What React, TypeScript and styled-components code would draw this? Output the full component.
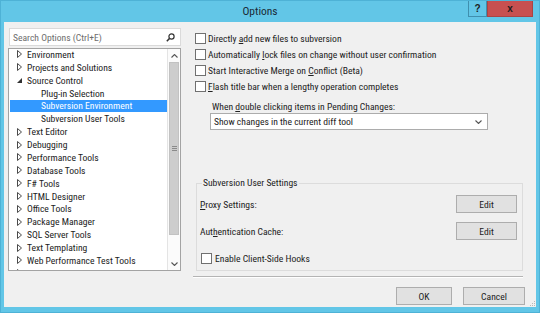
import styled, { createGlobalStyle } from 'styled-components';

const GlobalStyle = createGlobalStyle`
  html, body {
    margin: 0;
    padding: 0;
    background: #62c6e7;
  }

  body {
    font-family: "Roboto Condensed", "Noto Sans", sans-serif;
    font-size: 9.6px;
    color: #222;
  }

  *, *::before, *::after {
    box-sizing: border-box;
  }
`;

const Window = styled.div`
  width: 540px;
  height: 313px;
  display: flex;
  flex-direction: column;
  background: #62c6e7;
  border: 1px solid #4eb2d6;
  padding: 0 3px 5px 3px;
`;

const TitleBar = styled.div`
  height: 21px;
  display: flex;
  align-items: flex-start;
  flex-shrink: 0;
`;

const Title = styled.div`
  flex: 1;
  text-align: center;
  padding-left: 48px;
  font-size: 11.5px;
  line-height: 21px;
  color: #1b2b36;
`;

const CaptionButton = styled.div<{ $close?: boolean }>`
  width: ${({ $close }) => ($close ? '46px' : '19px')};
  height: 16px;
  margin-right: ${({ $close }) => ($close ? '3px' : '0')};
  display: flex;
  align-items: center;
  justify-content: center;
  background: ${({ $close }) => ($close ? '#c75050' : '#62c6e7')};
  border: 1px solid ${({ $close }) => ($close ? '#a94444' : '#3f8fae')};
  border-top: none;
  color: #1c1c1c;
  font-family: "Liberation Sans", sans-serif;
  font-weight: bold;
  font-size: 10px;
`;

const Client = styled.div`
  flex: 1;
  position: relative;
  display: grid;
  grid-template-columns: 173px 1fr;
  padding: 6px 0 0 4px;
  background: #f0f0f0;
`;

const LeftColumn = styled.div`
  display: flex;
  flex-direction: column;
`;

const SearchBox = styled.div`
  width: 172px;
  height: 18px;
  margin-left: 1px;
  display: flex;
  align-items: center;
  justify-content: space-between;
  padding: 0 5px 0 3px;
  background: #fff;
  border: 1px solid #dadada;
  color: #6d6d6d;
`;

const Tree = styled.div`
  height: 223px;
  margin-top: 2px;
  display: flex;
  background: #fff;
  border: 1px solid #a3a3a3;
`;

const TreeList = styled.div`
  flex: 1;
  overflow: hidden;
  margin-top: -1px;
  padding-left: 1px;
`;

const TreeRow = styled.div<{ $level: number; $selected?: boolean }>`
  height: 12.875px;
  display: flex;
  align-items: center;
  white-space: nowrap;
  padding-left: ${({ $level }) => 7 + $level * 14}px;
  background: ${({ $selected }) => ($selected ? '#3399ff' : 'transparent')};
  color: ${({ $selected }) => ($selected ? '#fff' : '#222')};
`;

const Expander = styled.span`
  width: 10px;
  height: 8px;
  flex-shrink: 0;
  display: flex;
  align-items: center;
`;

const ScrollBar = styled.div`
  width: 13px;
  display: flex;
  flex-direction: column;
  background: #fbfbfb;
  border-left: 1px solid #e4e4e4;
`;

const ScrollArrow = styled.div<{ $height: number }>`
  height: ${({ $height }) => $height}px;
  display: flex;
  align-items: center;
  justify-content: center;
`;

const ScrollThumb = styled.div`
  height: 173px;
  margin: 0 1px;
  display: flex;
  align-items: center;
  justify-content: center;
  background: #cdcdcd;
  border: 1px solid #c2c2c2;
`;

const ScrollTrack = styled.div`
  flex: 1;
`;

const RightColumn = styled.div`
  display: flex;
  flex-direction: column;
`;

const CheckList = styled.div`
  margin-top: 2px;
  display: flex;
  flex-direction: column;
`;

const CheckRow = styled.label<{ $indent: number; $gap: number }>`
  height: 16px;
  display: flex;
  align-items: center;
  gap: ${({ $gap }) => $gap}px;
  padding-left: ${({ $indent }) => $indent}px;
  white-space: nowrap;
`;

const Box = styled.span`
  width: 11px;
  height: 11px;
  flex-shrink: 0;
  background: #fff;
  border: 1px solid #707070;
`;

const FieldLabel = styled.div`
  margin-top: 7px;
  padding-left: 31px;
  line-height: 12px;
`;

const Select = styled.div`
  width: 278px;
  height: 17px;
  margin-left: 29px;
  display: flex;
  align-items: center;
  justify-content: space-between;
  padding: 0 5px 0 3px;
  background: #fff;
  border: 1px solid #acacac;
`;

const GroupBox = styled.fieldset`
  margin: 47px 13px 0 15px;
  padding: 3px 5px 4px 3px;
  border: 1px solid #dcdcdc;
  min-width: 0;
`;

const GroupLegend = styled.legend`
  margin-left: 2px;
  padding: 0 1px;
  line-height: 12px;
`;

const SettingRow = styled.div<{ $gap: number }>`
  height: 18px;
  margin-top: ${({ $gap }) => $gap}px;
  display: flex;
  align-items: center;
  justify-content: space-between;
`;

const PushButton = styled.div<{ $width: number }>`
  width: ${({ $width }) => $width}px;
  height: 18px;
  display: flex;
  align-items: center;
  justify-content: center;
  background: #e1e1e1;
  border: 1px solid #adadad;
`;

const HooksRow = styled.div`
  margin-top: 10px;
`;

const Separator = styled.div`
  height: 2px;
  margin: 5px 13px 0 12px;
  border-top: 1px solid #b4b4b4;
  border-bottom: 1px solid #fff;
`;

const ButtonBar = styled.div`
  margin-top: 9px;
  padding-right: 11px;
  display: flex;
  justify-content: flex-end;
  gap: 11px;
`;

const Grip = styled.svg`
  position: absolute;
  right: 1px;
  bottom: 1px;
`;

type Node = { label: string; level: number; state?: 'open' | 'closed'; selected?: boolean };

const treeNodes: Node[] = [
  { label: 'Environment', level: 0, state: 'closed' },
  { label: 'Projects and Solutions', level: 0, state: 'closed' },
  { label: 'Source Control', level: 0, state: 'open' },
  { label: 'Plug-in Selection', level: 1 },
  { label: 'Subversion Environment', level: 1, selected: true },
  { label: 'Subversion User Tools', level: 1 },
  { label: 'Text Editor', level: 0, state: 'closed' },
  { label: 'Debugging', level: 0, state: 'closed' },
  { label: 'Performance Tools', level: 0, state: 'closed' },
  { label: 'Database Tools', level: 0, state: 'closed' },
  { label: 'F# Tools', level: 0, state: 'closed' },
  { label: 'HTML Designer', level: 0, state: 'closed' },
  { label: 'Office Tools', level: 0, state: 'closed' },
  { label: 'Package Manager', level: 0, state: 'closed' },
  { label: 'SQL Server Tools', level: 0, state: 'closed' },
  { label: 'Text Templating', level: 0, state: 'closed' },
  { label: 'Web Performance Test Tools', level: 0, state: 'closed' },
  { label: 'Windows Forms Designer', level: 0, state: 'closed' },
];

const ExpanderIcon = ({ state }: { state?: 'open' | 'closed' }) => {
  if (state === 'closed') {
    return (
      <svg width="5" height="8" viewBox="0 0 5 8">
        <path d="M0.5 0.5 L4.5 4 L0.5 7.5 Z" fill="none" stroke="#4a4a4a" strokeWidth="1" />
      </svg>
    );
  }
  if (state === 'open') {
    return (
      <svg width="5" height="8" viewBox="0 0 5 8">
        <path d="M5 2 L5 7 L0 7 Z" fill="#333" />
      </svg>
    );
  }
  return null;
};

const Chevron = ({ up }: { up?: boolean }) => (
  <svg width="7" height="4" viewBox="0 0 7 4">
    <path d={up ? 'M0.5 3.5 L3.5 0.5 L6.5 3.5' : 'M0.5 0.5 L3.5 3.5 L6.5 0.5'} fill="none" stroke="#555" strokeWidth="1.1" />
  </svg>
);

const SearchIcon = () => (
  <svg width="9" height="9" viewBox="0 0 9 9">
    <circle cx="5.5" cy="3.5" r="2.6" fill="none" stroke="#333" strokeWidth="1.2" />
    <path d="M3.6 5.4 L0.8 8.2" stroke="#333" strokeWidth="1.5" />
  </svg>
);

const ThumbGrip = () => (
  <svg width="5" height="5" viewBox="0 0 5 5">
    <path d="M0 0.5 H5 M0 2.5 H5 M0 4.5 H5" stroke="#8a8a8a" strokeWidth="1" />
  </svg>
);

const Check = ({ children, indent = 14, gap = 2 }: { children: React.ReactNode; indent?: number; gap?: number }) => (
  <CheckRow $indent={indent} $gap={gap}>
    <Box />
    <span>{children}</span>
  </CheckRow>
);

const App = () => (
  <>
    <GlobalStyle />
    <Window>
      <TitleBar>
        <Title>Options</Title>
        <CaptionButton>?</CaptionButton>
        <CaptionButton $close>x</CaptionButton>
      </TitleBar>
      <Client>
        <LeftColumn>
          <SearchBox>
            <span>Search Options (Ctrl+E)</span>
            <SearchIcon />
          </SearchBox>
          <Tree>
            <TreeList>
              {treeNodes.map((node) => (
                <TreeRow key={node.label} $level={node.level} $selected={node.selected}>
                  <Expander>
                    <ExpanderIcon state={node.state} />
                  </Expander>
                  {node.label}
                </TreeRow>
              ))}
            </TreeList>
            <ScrollBar>
              <ScrollArrow $height={13}>
                <Chevron up />
              </ScrollArrow>
              <ScrollThumb>
                <ThumbGrip />
              </ScrollThumb>
              <ScrollTrack />
              <ScrollArrow $height={12}>
                <Chevron />
              </ScrollArrow>
            </ScrollBar>
          </Tree>
        </LeftColumn>

        <RightColumn>
          <CheckList>
            <Check>Directly <u>a</u>dd new files to subversion</Check>
            <Check>Automatically <u>l</u>ock files on change without user confirmation</Check>
            <Check>Start Interactive Merge on <u>C</u>onflict (Beta)</Check>
            <Check><u>F</u>lash title bar when a lengthy operation completes</Check>
          </CheckList>
          <FieldLabel>When <u>d</u>ouble clicking items in Pending Changes:</FieldLabel>
          <Select>
            <span>Show changes in the current diff tool</span>
            <Chevron />
          </Select>

          <GroupBox>
            <GroupLegend>Subversion User Settings</GroupLegend>
            <SettingRow $gap={3}>
              <span><u>P</u>roxy Settings:</span>
              <PushButton $width={61}>Edit</PushButton>
            </SettingRow>
            <SettingRow $gap={9}>
              <span>Aut<u>h</u>entication Cache:</span>
              <PushButton $width={61}>Edit</PushButton>
            </SettingRow>
            <HooksRow>
              <Check indent={1} gap={3}>Enable Client-Side Hooks</Check>
            </HooksRow>
          </GroupBox>

          <Separator />
          <ButtonBar>
            <PushButton $width={56}>OK</PushButton>
            <PushButton $width={62}>Cancel</PushButton>
          </ButtonBar>
        </RightColumn>

        <Grip width="6" height="6" viewBox="0 0 6 6">
          <path d="M5 1h1v1H5zM3 3h1v1H3zM5 3h1v1H5zM1 5h1v1H1zM3 5h1v1H3zM5 5h1v1H5z" fill="#b8b8b8" />
        </Grip>
      </Client>
    </Window>
  </>
);

export default App;
